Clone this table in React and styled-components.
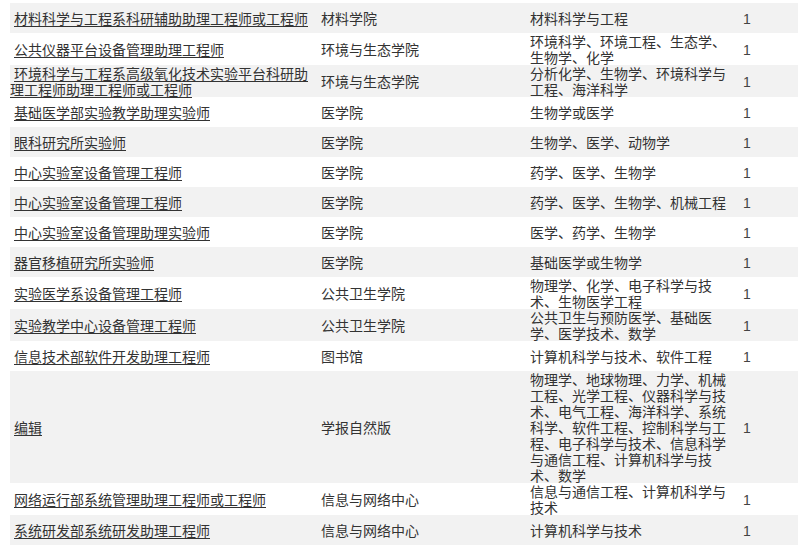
import { createGlobalStyle, styled } from "styled-components"

const GlobalStyle = createGlobalStyle`
  html, body {
    margin: 0;
    padding: 0;
    background: #ffffff;
    overflow: hidden;
  }
`

const Page = styled.div`
  padding: 3px 0 0 10px;
`

const Table = styled.table`
  border-collapse: collapse;
  table-layout: fixed;
  width: 788px;
  font-family: "Noto Sans CJK SC", sans-serif;
  font-size: 14px;
  line-height: 16px;
  color: #333333;
`

const Row = styled.tr`
  background-color: ${({ $odd }) => ($odd ? "#f2f2f2" : "#ffffff")};
`

const Cell = styled.td`
  height: 30px;
  padding: 0 0 0 ${({ $pad }) => $pad ?? 4}px;
  text-indent: ${({ $indent }) => $indent || 0}px;
  vertical-align: middle;
  word-break: break-all;
  box-sizing: border-box;
`

const JobLink = styled.a`
  color: #333333;
  text-decoration: underline;
  text-underline-offset: 2px;
  cursor: pointer;
`

const Count = styled.span`
  font-family: "Liberation Sans", sans-serif;
  color: #444444;
  padding-left: 2px;
`

const jobs = [
  ["材料科学与工程系科研辅助助理工程师或工程师", "材料学院", "材料科学与工程"],
  ["公共仪器平台设备管理助理工程师", "环境与生态学院", "环境科学、环境工程、生态学、生物学、化学"],
  ["环境科学与工程系高级氧化技术实验平台科研助理工程师助理工程师或工程师", "环境与生态学院", "分析化学、生物学、环境科学与工程、海洋科学"],
  ["基础医学部实验教学助理实验师", "医学院", "生物学或医学"],
  ["眼科研究所实验师", "医学院", "生物学、医学、动物学"],
  ["中心实验室设备管理工程师", "医学院", "药学、医学、生物学"],
  ["中心实验室设备管理工程师", "医学院", "药学、医学、生物学、机械工程"],
  ["中心实验室设备管理助理实验师", "医学院", "医学、药学、生物学"],
  ["器官移植研究所实验师", "医学院", "基础医学或生物学"],
  ["实验医学系设备管理工程师", "公共卫生学院", "物理学、化学、电子科学与技术、生物医学工程"],
  ["实验教学中心设备管理工程师", "公共卫生学院", "公共卫生与预防医学、基础医学、医学技术、数学"],
  ["信息技术部软件开发助理工程师", "图书馆", "计算机科学与技术、软件工程"],
  ["编辑", "学报自然版", "物理学、地球物理、力学、机械工程、光学工程、仪器科学与技术、电气工程、海洋科学、系统科学、软件工程、控制科学与工程、电子科学与技术、信息科学与通信工程、计算机科学与技术、数学"],
  ["网络运行部系统管理助理工程师或工程师", "信息与网络中心", "信息与通信工程、计算机科学与技术"],
  ["系统研发部系统研发助理工程师", "信息与网络中心", "计算机科学与技术"],
]

const App = () => {
  return (
    <Page>
      <GlobalStyle />
      <Table>
        <colgroup>
          <col style={{ width: 307 }} />
          <col style={{ width: 209 }} />
          <col style={{ width: 211 }} />
          <col style={{ width: 61 }} />
        </colgroup>
        <tbody>
          {jobs.map(([title, dept, major], i) => (
            <Row key={i} $odd={i % 2 === 0}>
              <Cell $pad={0} $indent={4}>
                <JobLink>{title}</JobLink>
              </Cell>
              <Cell>{dept}</Cell>
              <Cell>{major}</Cell>
              <Cell>
                <Count>1</Count>
              </Cell>
            </Row>
          ))}
        </tbody>
      </Table>
    </Page>
  )
}

export default App
